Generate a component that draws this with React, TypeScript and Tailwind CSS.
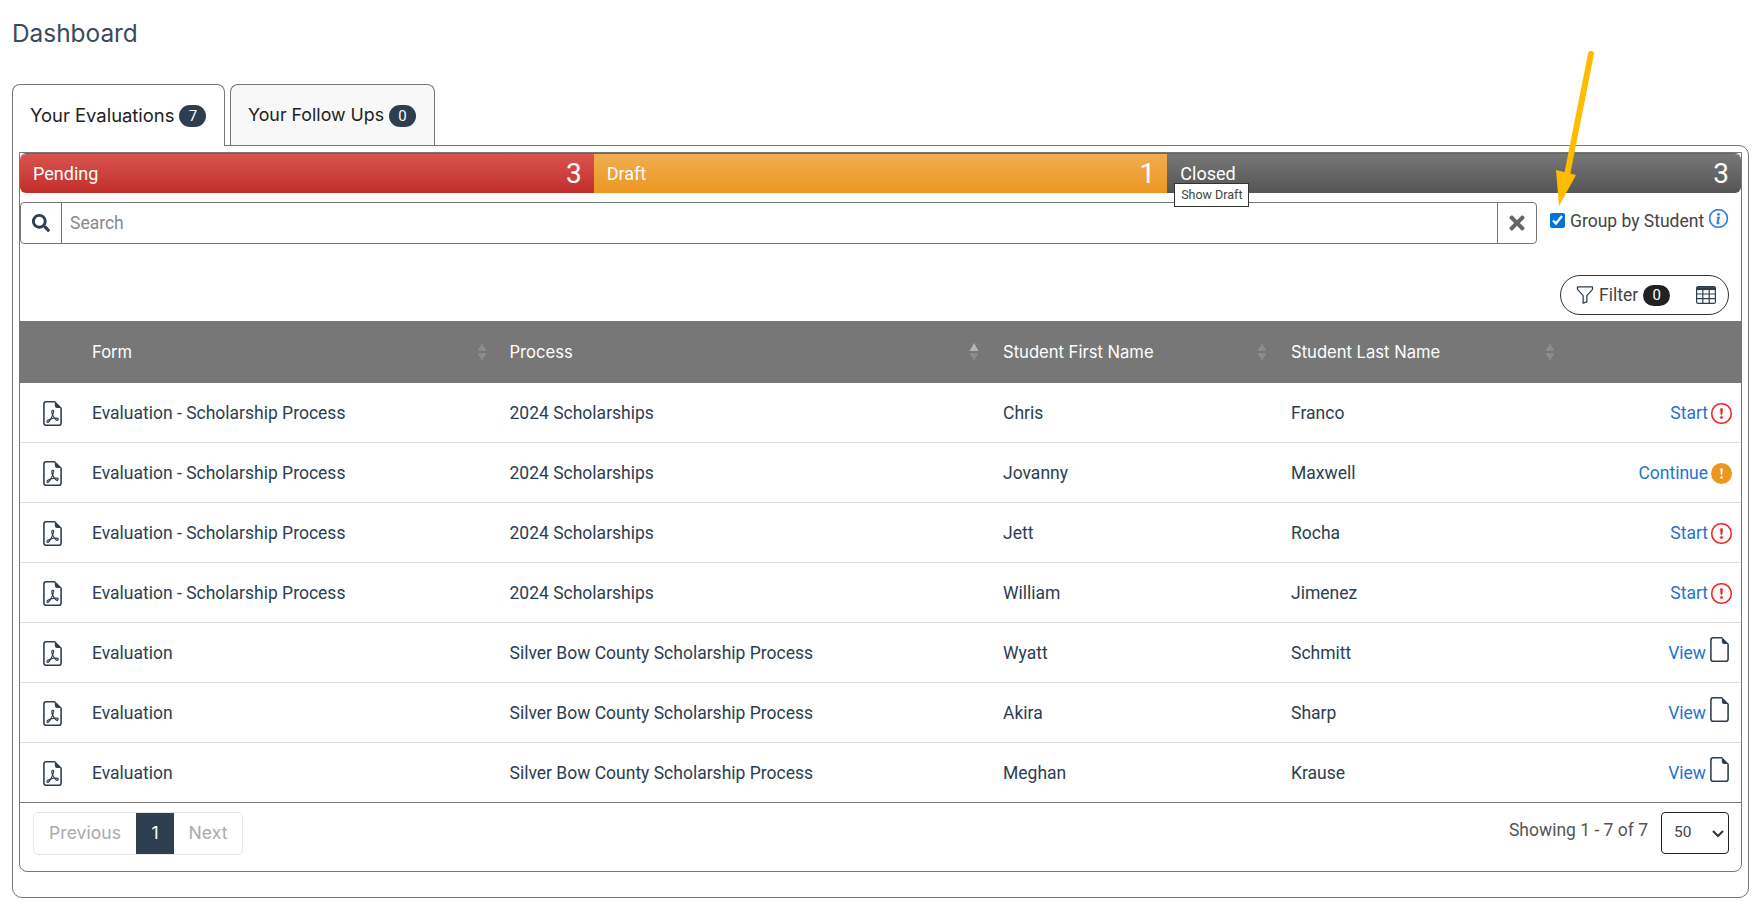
import React from 'react';
import { BsFileEarmark, BsFileEarmarkPdf, BsExclamationCircle, BsExclamationCircleFill, BsInfoCircle, BsFunnel } from 'react-icons/bs';
import { FaSearch, FaTimes } from 'react-icons/fa';

const rows = [
    { form: 'Evaluation - Scholarship Process', process: '2024 Scholarships', first: 'Chris', last: 'Franco', action: 'Start' },
    { form: 'Evaluation - Scholarship Process', process: '2024 Scholarships', first: 'Jovanny', last: 'Maxwell', action: 'Continue' },
    { form: 'Evaluation - Scholarship Process', process: '2024 Scholarships', first: 'Jett', last: 'Rocha', action: 'Start' },
    { form: 'Evaluation - Scholarship Process', process: '2024 Scholarships', first: 'William', last: 'Jimenez', action: 'Start' },
    { form: 'Evaluation', process: 'Silver Bow County Scholarship Process', first: 'Wyatt', last: 'Schmitt', action: 'View' },
    { form: 'Evaluation', process: 'Silver Bow County Scholarship Process', first: 'Akira', last: 'Sharp', action: 'View' },
    { form: 'Evaluation', process: 'Silver Bow County Scholarship Process', first: 'Meghan', last: 'Krause', action: 'View' },
];

const SortIcon = ({ active }: { active?: boolean }) => (
    <svg width="10" height="20" viewBox="0 0 10 20" className="shrink-0">
        <path d="M5 1 L9.5 9 L0.5 9 Z" fill={active ? '#b5b5b5' : '#8c8c8c'} />
        <path d="M5 19 L9.5 11 L0.5 11 Z" fill="#8c8c8c" />
    </svg>
);

const GridIcon = () => (
    <svg width="20" height="18" viewBox="0 0 20 18" fill="none" stroke="#2c3e50" strokeWidth="1.2">
        <rect x="0.6" y="0.6" width="18.8" height="16.8" rx="1.5" />
        <path d="M0.6 2.6 H19.4" strokeWidth="3" />
        <path d="M0.6 8 H19.4 M0.6 12.7 H19.4 M6.8 3 V17.4 M13.2 3 V17.4" />
    </svg>
);

const Badge = ({ n }: { n: number }) => (
    <span className="ml-[5px] flex h-[22px] w-[27px] items-center justify-center rounded-[11px] bg-[#2c3e50] font-[Roboto] text-[15px] text-white">
        {n}
    </span>
);

const StatusBar = ({ label, count, barClass, children }: { label: string; count: number; barClass: string; children?: React.ReactNode }) => (
    <div className={`relative flex h-[39px] items-center justify-between pl-[13px] pr-[12px] text-white ${barClass}`}>
        <span className="text-[18px]">{label}</span>
        <span className="text-[28px] leading-none">{count}</span>
        {children}
    </div>
);

const Action = ({ kind }: { kind: string }) => (
    <div className="flex flex-1 items-center justify-end pr-[9px] text-[17.5px] text-[#1f74d0]">
        <span>{kind}</span>
        {kind === 'Start' && <BsExclamationCircle size={21} strokeWidth={0.2} className="ml-[3px] text-[#f01c1c]" />}
        {kind === 'Continue' && <BsExclamationCircleFill size={21} className="ml-[3px] text-[#ec971f]" />}
        {kind === 'View' && <BsFileEarmark size={25} className="ml-[1px] -translate-y-[4px] text-[#2c3e50]" />}
    </div>
);

export default function App() {
    return (
        <div className="relative h-[907px] w-[1763px] overflow-hidden bg-white font-[Roboto,sans-serif] text-[#2c3e50]">
            <h1 className="flex h-[84px] items-start pl-[12px] pt-[16px] font-[Inter] text-[24.4px] leading-[34px] text-[#3a4a5a]">Dashboard</h1>

            <div className="relative z-10 flex h-[62px] pl-[12px]">
                <div className="flex h-[62px] w-[213px] items-start rounded-t-[8px] border border-b-0 border-[#777] bg-white pl-[17px] pt-[20px]">
                    <span className="-translate-y-px font-[Inter] text-[18.4px] leading-[22px] text-[#222]">Your Evaluations</span>
                    <Badge n={7} />
                </div>
                <div className="ml-[5px] flex h-[61px] w-[205px] items-start rounded-t-[8px] border border-b-0 border-[#777] bg-[#f8f8f8] pl-[17px] pt-[20px]">
                    <span className="-translate-y-px font-[Inter] text-[17.8px] leading-[22px] text-[#222]">Your Follow Ups</span>
                    <Badge n={0} />
                </div>
            </div>

            <div className="ml-[12px] h-[753px] w-[1737px] -translate-y-px rounded-b-[10px] rounded-tr-[10px] border border-[#777] px-[6px] pt-[6px]">
                <div className="h-[720px] rounded-b-[8px] border border-[#777]">
                    <div className="grid grid-cols-3 overflow-visible rounded-t-[6px] border-t border-[#666]">
                        <StatusBar label="Pending" count={3} barClass="rounded-l-[6px] bg-gradient-to-b from-[#d9534f] to-[#c12e2a]" />
                        <StatusBar label="Draft" count={1} barClass="bg-gradient-to-b from-[#f0ad4e] to-[#ec971f]" />
                        <StatusBar label="Closed" count={3} barClass="rounded-r-[6px] bg-gradient-to-b from-[#777] to-[#555]">
                            <div className="absolute left-[7px] top-[29px] z-20 flex h-[24px] w-[75px] items-center justify-center border border-[#333] bg-white text-[12.5px] text-[#444]">
                                Show Draft
                            </div>
                        </StatusBar>
                    </div>

                    <div className="mt-[9px] flex h-[42px] items-start">
                        <div className="flex h-[42px] w-[1517px] rounded-[4px] border border-[#777]">
                            <div className="flex w-[41px] items-center justify-center border-r border-[#777]">
                                <FaSearch size={18} />
                            </div>
                            <div className="flex flex-1 items-center pl-[8px] text-[17.5px] text-[#8a8a8a]">Search</div>
                            <div className="flex w-[39px] items-center justify-center border-l border-[#777]">
                                <FaTimes size={22} className="text-[#666]" />
                            </div>
                        </div>
                        <label className="ml-[13px] flex h-[36px] items-center text-[17.5px] text-[#444]">
                            <input type="checkbox" defaultChecked className="h-[15px] w-[15px] accent-[#0075d6]" />
                            <span className="ml-[5px] translate-y-px">Group by Student</span>
                            <BsInfoCircle size={19} strokeWidth={0.4} className="ml-[5px] -translate-y-[2px] text-[#1f74e8]" />
                        </label>
                    </div>

                    <div className="mt-[31px] flex h-[40px] justify-end pr-[12px]">
                        <div className="flex w-[169px] items-center rounded-[20px] border border-[#333] pl-[14px]">
                            <BsFunnel size={20} className="text-[#2c3e50]" />
                            <span className="ml-[4px] text-[17.5px] text-[#444]">Filter</span>
                            <span className="ml-[5px] flex h-[21px] w-[27px] items-center justify-center rounded-[11px] bg-[#222] text-[15px] text-white">0</span>
                            <span className="ml-[25px] translate-x-px"><GridIcon /></span>
                        </div>
                    </div>

                    <div className="mt-[6px] flex h-[62px] items-center bg-[#777] font-[Inter] text-[16.6px] font-normal text-white">
                        <div className="w-[72px]" />
                        <div className="flex w-[417.5px] items-center justify-between pr-[23px]">Form<SortIcon /></div>
                        <div className="flex w-[493.5px] items-center justify-between pr-[24px]">Process<SortIcon active /></div>
                        <div className="flex w-[288px] items-center justify-between pr-[24px]">Student First Name<SortIcon /></div>
                        <div className="flex w-[288px] items-center justify-between pr-[24px]">Student Last Name<SortIcon /></div>
                    </div>

                    {rows.map((row, i) => (
                        <div key={i} className={`flex h-[60px] items-center pt-[1px] text-[17.5px] ${i === rows.length - 1 ? 'border-b border-[#777]' : 'border-b border-[#ddd]'}`}>
                            <div className="flex w-[72px] justify-start pl-[20px]">
                                <BsFileEarmarkPdf size={25} />
                            </div>
                            <div className="w-[417.5px]">{row.form}</div>
                            <div className="w-[493.5px]">{row.process}</div>
                            <div className="w-[288px]">{row.first}</div>
                            <div className="w-[288px]">{row.last}</div>
                            <Action kind={row.action} />
                        </div>
                    ))}

                    <div className="flex items-start justify-between pl-[13px] pr-[12px] pt-[9px]">
                        <div className="flex h-[43px] items-stretch rounded-[5px] border border-[#e6e6e6] font-[Inter] text-[17.6px] text-[#aaa]">
                            <span className="flex w-[102px] items-center justify-center">Previous</span>
                            <span className="flex w-[38px] items-center justify-center bg-[#2c3e50] text-white">1</span>
                            <span className="flex w-[68px] items-center justify-center">Next</span>
                        </div>
                        <div className="flex items-start">
                            <span className="mt-[5px] text-[17.5px] text-[#555]">Showing 1 - 7 of 7</span>
                            <div className="relative ml-[13px] h-[42px] w-[68px]">
                                <select defaultValue="50" className="h-[42px] w-[68px] appearance-none rounded-[4px] border border-[#222] bg-white pl-[12px] text-[15.5px] text-[#444]">
                                    <option>50</option>
                                </select>
                                <svg width="12" height="8" viewBox="0 0 12 8" fill="none" stroke="#333" strokeWidth="2" className="pointer-events-none absolute right-[5px] top-[18px]">
                                    <path d="M1 1 L6 6 L11 1" />
                                </svg>
                            </div>
                        </div>
                    </div>
                </div>
            </div>

            <svg width="70" height="180" viewBox="0 0 70 180" className="pointer-events-none absolute left-[1540px] top-[40px] z-30">
                <path d="M51 14 L27 135" stroke="#ffbb00" strokeWidth="6" strokeLinecap="round" />
                <path d="M16 130 L36 135 L19 166 Z" fill="#ffbb00" />
            </svg>
        </div>
    );
}
